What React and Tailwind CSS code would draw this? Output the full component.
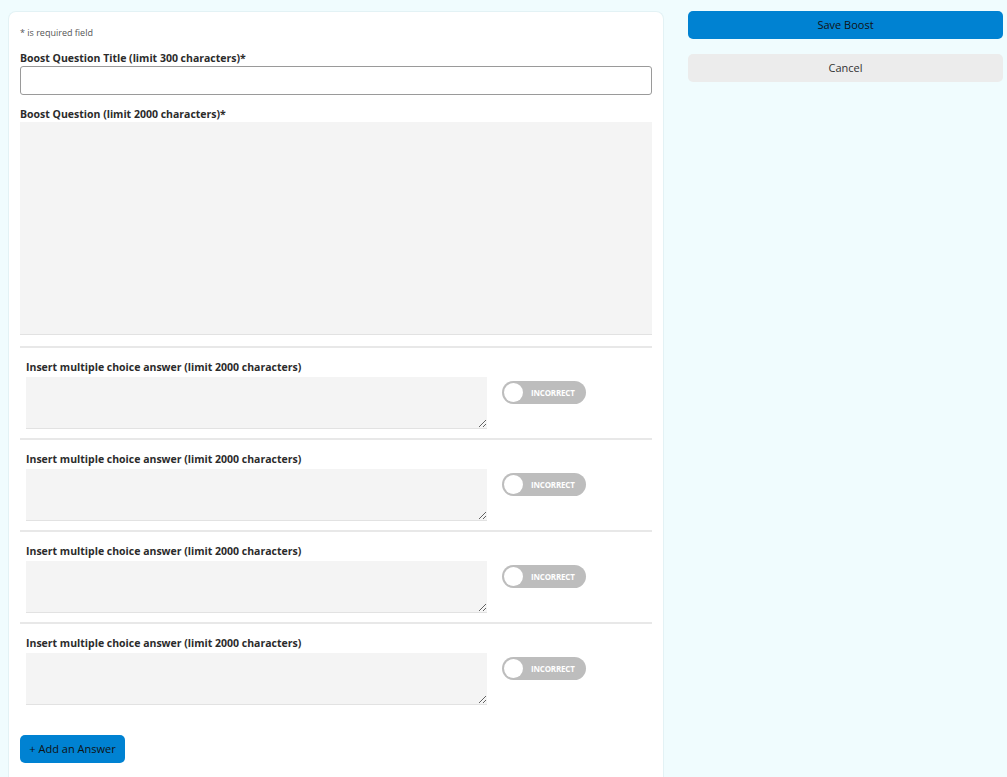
import { useState } from "react";

function AnswerToggle() {
  const [on, setOn] = useState(false);
  return (
    <button
      type="button"
      onClick={() => setOn(!on)}
      className={`relative mt-[4px] h-[23px] w-[84px] shrink-0 rounded-full ${on ? "bg-[#3aa35b]" : "bg-[#bdbdbd]"}`}
    >
      <span
        className={`absolute top-[2px] h-[19px] w-[19px] rounded-full bg-white ${on ? "left-[63px]" : "left-[2px]"}`}
      />
      <span
        className={`absolute top-0 flex h-full items-center text-[8px] font-bold tracking-tight text-white ${on ? "left-[14px]" : "left-[29px]"}`}
      >
        {on ? "CORRECT" : "INCORRECT"}
      </span>
    </button>
  );
}

export default function App() {
  const [answers, setAnswers] = useState([0, 1, 2, 3]);

  return (
    <div
      className="flex min-h-[777px] gap-6 bg-[#f0fcfe] pl-2 pr-1 pt-[11px]"
      style={{ fontFamily: '"Open Sans", "Noto Sans", sans-serif' }}
    >
      {/* Form card */}
      <div className="w-[656px] shrink-0 rounded-t-[8px] border border-b-0 border-[#e3f2f5] bg-white px-[11px] pb-10 pt-[14px] text-[#2b2b2b]">
        <p className="text-[9px] leading-[14px] text-[#555]">* is required field</p>

        <label className="mt-[10px] block text-[10.5px] font-bold leading-[16px]">
          Boost Question Title (limit 300 characters)*
        </label>
        <input
          type="text"
          className="block h-[29px] w-full rounded-[3px] border border-[#9a9a9a] px-2 text-[12px] outline-none"
        />

        <label className="mt-[11px] block text-[10.5px] font-bold leading-[16px]">
          Boost Question (limit 2000 characters)*
        </label>
        <textarea className="block h-[213px] w-full resize-none border-b border-[#e2e2e2] bg-[#f4f4f4] p-2 text-[12px] outline-none" />

        <div className="mt-[11px]">
          {answers.map((a) => (
            <div key={a} className="border-t-2 border-[#e8e8e8] pb-[9px] pl-[6px] pt-[11px]">
              <label className="block text-[10.5px] font-bold leading-[16px]">
                Insert multiple choice answer (limit 2000 characters)
              </label>
              <div className="mt-[2px] flex gap-[15px]">
                <textarea className="block h-[52px] w-[461px] border-b border-[#e2e2e2] bg-[#f4f4f4] p-2 text-[12px] outline-none" />
                <AnswerToggle />
              </div>
            </div>
          ))}
        </div>

        <button
          type="button"
          onClick={() => setAnswers([...answers, answers.length])}
          className="mt-[21px] h-[28px] w-[105px] rounded-[5px] bg-[#0082d2] text-[11px] text-[#111]"
        >
          + Add an Answer
        </button>
      </div>

      {/* Actions */}
      <div className="flex flex-1 flex-col gap-[15px]">
        <button type="button" className="h-[28px] w-full rounded-[5px] bg-[#0082d2] text-[11px] text-[#111]">
          Save Boost
        </button>
        <button type="button" className="h-[28px] w-full rounded-[5px] bg-[#ececec] text-[11px] text-[#333]">
          Cancel
        </button>
      </div>
    </div>
  );
}
